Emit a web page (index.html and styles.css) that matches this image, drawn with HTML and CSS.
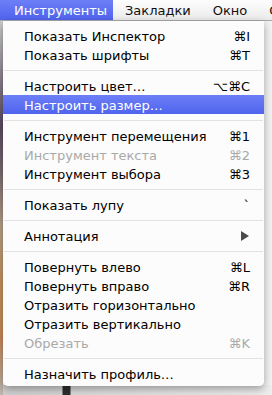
FILE: index.html
```html
<!DOCTYPE html>
<html lang="ru">
<head>
  <meta charset="UTF-8">
  <meta name="viewport" content="width=device-width, initial-scale=1.0">
  <title>Инструменты</title>
  <link rel="stylesheet" href="styles.css">
</head>
<body>
  <div class="menubar">
    <span class="title active">Инструменты</span>
    <span class="title">Закладки</span>
    <span class="title">Окно</span>
    <span class="title">Справка</span>
  </div>

  <div class="screen">
    <div class="menu">
      <div class="item"><span>Показать Инспектор</span><span class="key">⌘I</span></div>
      <div class="item"><span>Показать шрифты</span><span class="key">⌘T</span></div>
      <div class="sep"></div>
      <div class="item"><span>Настроить цвет…</span><span class="key">⌥⌘C</span></div>
      <div class="item selected"><span>Настроить размер…</span></div>
      <div class="sep"></div>
      <div class="item"><span>Инструмент перемещения</span><span class="key">⌘1</span></div>
      <div class="item disabled"><span>Инструмент текста</span><span class="key">⌘2</span></div>
      <div class="item"><span>Инструмент выбора</span><span class="key">⌘3</span></div>
      <div class="sep"></div>
      <div class="item"><span>Показать лупу</span><span class="key">`</span></div>
      <div class="sep"></div>
      <div class="item"><span>Аннотация</span><span class="arrow"></span></div>
      <div class="sep"></div>
      <div class="item"><span>Повернуть влево</span><span class="key">⌘L</span></div>
      <div class="item"><span>Повернуть вправо</span><span class="key">⌘R</span></div>
      <div class="item"><span>Отразить горизонтально</span></div>
      <div class="item"><span>Отразить вертикально</span></div>
      <div class="item disabled"><span>Обрезать</span><span class="key">⌘K</span></div>
      <div class="sep"></div>
      <div class="item"><span>Назначить профиль…</span></div>
    </div>
  </div>
</body>
</html>
```

FILE: styles.css
```css
* {
  margin: 0;
  padding: 0;
  box-sizing: border-box;
}

body {
  width: 272px;
  height: 395px;
  overflow: hidden;
  font-family: 'DejaVu Sans', 'Noto Sans', sans-serif;
  color: #000000;
  background: #e4e4e4;
}

.menubar {
  height: 21px;
  display: flex;
  align-items: stretch;
  white-space: nowrap;
  overflow: hidden;
  background: linear-gradient(#fdfdfd, #ebebeb);
  border-bottom: 1px solid #a9a9a9;
  font-size: 13px;
}

.title {
  display: flex;
  align-items: center;
  padding: 0 10px 0 12px;
  color: #111111;
}

.title.active {
  flex: none;
  padding: 0 8px 0 14px;
  width: 113px;
  color: #ffffff;
  background: linear-gradient(#6d7ff6, #4f63ee);
}

.screen {
  display: flex;
  height: 374px;
  padding-left: 3px;
  background:
    linear-gradient(#cfcfcf, #8d8491 15%, #5b4b63 28%, #7a6a70 40%, #b7a38a 55%, #c6915e 70%, #c8895a 85%, #bdb7b0) left top / 3px 100% no-repeat,
    linear-gradient(90deg, #cfcfcf 0, #d6d6d6 62px, #2e2e2e 63px, #2e2e2e 70px, #dadada 71px, #ededed 100%) left bottom / 100% 10px no-repeat,
    linear-gradient(90deg, #f6f6f6, #f3f3f3);
}

.menu {
  width: 261px;
  height: 365px;
  padding: 5px 0 3px;
  background: rgba(252, 252, 252, 0.98);
  border-radius: 0 0 5px 5px;
  box-shadow: 0 3px 8px rgba(0, 0, 0, 0.35);
  font-size: 13px;
}

.item {
  height: 19px;
  display: flex;
  align-items: center;
  justify-content: space-between;
  padding: 1px 14px 0 21px;
  white-space: nowrap;
}

.item.selected {
  color: #ffffff;
  background: linear-gradient(#6d7ff6, #4f63ee);
}

.item.disabled {
  color: #a9a9a9;
}

.key {
  text-align: right;
}

.arrow {
  width: 0;
  height: 0;
  margin-right: 1px;
  border-top: 5px solid transparent;
  border-bottom: 5px solid transparent;
  border-left: 8px solid #4a4a4a;
}

.sep {
  height: 1px;
  margin: 6px 1px 5px;
  background: #e2e2e2;
}
```
